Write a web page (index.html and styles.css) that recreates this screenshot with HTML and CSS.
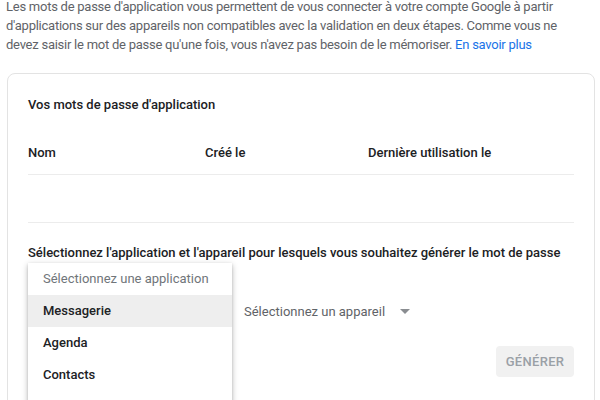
FILE: index.html
```html
<!DOCTYPE html>
<html>
<head>
  <title>Mots de passe d'application</title>
  <link rel="stylesheet" href="styles.css">
</head>
<body>
  <div class="page">
    <p class="intro">Les mots de passe d'application vous permettent de vous connecter à votre compte Google à partir d'applications sur des appareils non compatibles avec la validation en deux étapes. Comme vous ne devez saisir le mot de passe qu'une fois, vous n'avez pas besoin de le mémoriser. <a href="#" class="link">En savoir plus</a></p>

    <div class="card">
      <div class="card-title">Vos mots de passe d'application</div>

      <div class="table">
        <div class="row head">
          <span class="col-name">Nom</span>
          <span class="col-created">Créé le</span>
          <span class="col-used">Dernière utilisation le</span>
        </div>
        <div class="row empty"></div>
      </div>

      <div class="label">Sélectionnez l'application et l'appareil pour lesquels vous souhaitez générer le mot de passe</div>

      <div class="selects">
        <div class="select app-select">
          <span class="value">Sélectionnez une application</span>
          <span class="arrow"></span>
          <div class="menu">
            <div class="menu-item placeholder">Sélectionnez une application</div>
            <div class="menu-item active">Messagerie</div>
            <div class="menu-item">Agenda</div>
            <div class="menu-item">Contacts</div>
          </div>
        </div>
        <div class="select device-select">
          <span class="value">Sélectionnez un appareil</span>
          <span class="arrow"></span>
        </div>
      </div>

      <div class="actions">
        <button class="btn-generate" disabled>Générer</button>
      </div>
    </div>
  </div>
</body>
</html>
```

FILE: styles.css
```css
body {
  font-family: Roboto, "Liberation Sans", Arial, sans-serif;
  margin: 0;
  padding: 0;
  background: #fff;
  color: #202124;
  overflow: hidden;
}
.page {
  padding: 0 6px 0 6px;
}
.intro {
  margin: -3px 0 0 0;
  max-width: 565px;
  font-size: 13px;
  letter-spacing: -0.25px;
  line-height: 19px;
  color: #5f6368;
}
.link {
  color: #1a73e8;
  text-decoration: none;
}
.card {
  margin: 19px 0 0 1px;
  width: 546px;
  border: 1px solid #e3e3e3;
  border-radius: 8px;
  padding: 20px 20px 40px 20px;
}
.card-title {
  font-size: 13px;
  font-weight: 500;
  line-height: 22px;
}
.table {
  margin-top: 14px;
}
.row {
  display: flex;
  align-items: center;
  height: 44px;
  border-bottom: 1px solid #ececec;
  font-size: 13px;
  font-weight: 500;
}
.row.empty {
  height: 47px;
}
.col-name {
  width: 177px;
}
.col-created {
  width: 163px;
}
.label {
  margin-top: 20px;
  font-size: 13px;
  font-weight: 500;
  line-height: 20px;
  white-space: nowrap;
}
.selects {
  display: flex;
  margin-top: 32px;
  height: 32px;
}
.select {
  position: relative;
  display: flex;
  align-items: center;
  font-size: 13px;
  color: #5f6368;
}
.app-select {
  width: 216px;
}
.app-select .value {
  visibility: hidden;
}
.arrow {
  width: 0;
  height: 0;
  margin-left: 15px;
  border-left: 5px solid transparent;
  border-right: 5px solid transparent;
  border-top: 5px solid #8a8d91;
}
.menu {
  position: absolute;
  left: 0;
  top: -32px;
  width: 204px;
  background: #fff;
  box-shadow: 0 2px 6px rgba(0, 0, 0, 0.28), 0 1px 2px rgba(0, 0, 0, 0.12);
  padding-bottom: 24px;
}
.menu-item {
  height: 32px;
  line-height: 32px;
  padding-left: 15px;
  font-size: 13px;
  font-weight: 500;
  color: #202124;
  white-space: nowrap;
}
.menu-item.placeholder {
  color: #70757a;
  font-weight: 400;
}
.menu-item.active {
  background: #eeeeee;
}
.actions {
  display: flex;
  justify-content: flex-end;
  margin-top: 19px;
}
.btn-generate {
  font-family: inherit;
  font-size: 13px;
  font-weight: 500;
  text-transform: uppercase;
  letter-spacing: 0.3px;
  color: #9aa0a6;
  background: #f1f1f1;
  border: none;
  border-radius: 4px;
  width: 78px;
  height: 31px;
  padding: 0;
}
```
